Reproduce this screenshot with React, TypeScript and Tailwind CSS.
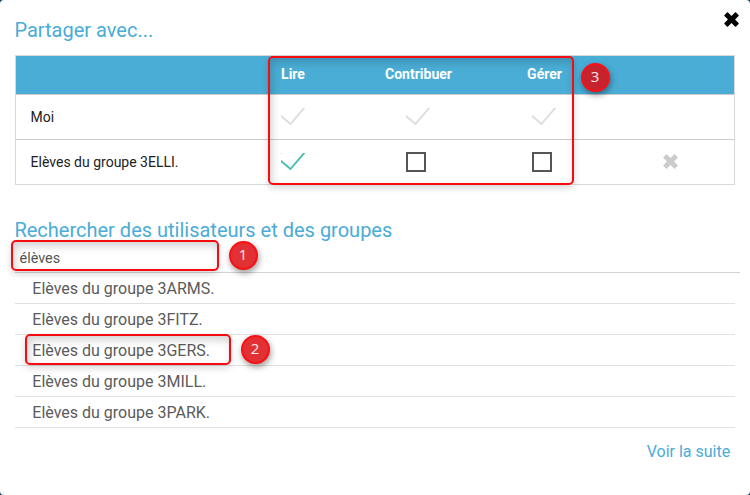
import React from "react";

function Check({ color }: { color: string }) {
  return (
    <svg width="24" height="18" viewBox="0 0 24 18" className="block" fill="none">
      <path d="M-1 7.2 L9.5 16 L23.6 -0.5" stroke={color} strokeWidth="1.9" />
      <path d="M0 0.5 H1" stroke={color} strokeOpacity="0.4" />
    </svg>
  );
}

function Box() {
  return (
    <div className="w-6">
      <div className="size-5 border-2 border-[#555]" />
    </div>
  );
}

function Cross({ size, color }: { size: number; color: string }) {
  return (
    <svg width={size} height={size} viewBox="0 0 16 16" className="block">
      <path
        d="M3.1 .5Q3.7 0 4.3 .5L8 4.2 11.7 .5Q12.3 0 12.9 .5L15.5 3.1Q16 3.7 15.5 4.3L11.8 8 15.5 11.7Q16 12.3 15.5 12.9L12.9 15.5Q12.3 16 11.7 15.5L8 11.8 4.3 15.5Q3.7 16 3.1 15.5L.5 12.9Q0 12.3 .5 11.7L4.2 8 .5 4.3Q0 3.7 .5 3.1Z"
        fill={color}
      />
    </svg>
  );
}

function Frame({ place }: { place: string }) {
  return (
    <div
      className={`pointer-events-none absolute rounded-[5px] border-2 border-[#f60c10] shadow-[0_3px_7px_rgba(0,0,0,0.16),inset_2px_4px_8px_rgba(0,0,0,0.18)] ${place}`}
    />
  );
}

function Badge({ n, place }: { n: number; place: string }) {
  return (
    <div
      className={`absolute flex size-[29px] items-center justify-center rounded-full border-2 border-[#fb1015] font-['Open_Sans',sans-serif] text-[15px] leading-none text-white/90 shadow-[1px_3px_6px_rgba(0,0,0,0.4)] ${place}`}
    >
      <span className="-mt-[2px] pr-px">{n}</span>
    </div>
  );
}

const groups = ["3ARMS", "3FITZ", "3GERS", "3MILL", "3PARK"];

export default function App() {
  return (
    <div className="h-[495px] w-[750px] overflow-hidden bg-[#173f54] font-[Roboto,sans-serif]">
      <main className="relative h-full rounded-[4px] bg-white pt-[18px] pl-[15px]">
        <div className="flex h-[37px] items-start justify-between pr-[11px]">
          <h1 className="-ml-[0.6px] text-[20px] leading-6 text-[#4aacd6]">Partager avec...</h1>
          <button aria-label="Fermer" className="-mt-[6px]">
            <Cross size={15} color="#000" />
          </button>
        </div>
        <section className="h-[130px] w-[720px] border border-[#d9d9d9] text-[14px] text-[#222]">
          <div className="grid h-[39px] grid-cols-[214px_126px_125px_127px_126px] border-b border-[#ccc] bg-[#4aadd6] pt-[9px] text-center leading-[19px] font-bold text-white">
            <span />
            <span>Lire</span>
            <span>Contribuer</span>
            <span>Gérer</span>
            <span />
          </div>
          <div className="grid h-[45px] grid-cols-[214px_126px_124px_128px_126px] items-center justify-items-center border-b border-[#ccc]">
            <span className="justify-self-start pl-[14.6px]">Moi</span>
            <Check color="#ddd" />
            <Check color="#ddd" />
            <Check color="#ddd" />
            <span />
          </div>
          <div className="grid h-[44px] grid-cols-[214px_126px_124px_128px_124px] items-center justify-items-center">
            <span className="justify-self-start pl-[14.6px]">Elèves du groupe 3ELLI.</span>
            <Check color="#46bfaf" />
            <Box />
            <Box />
            <div className="-mt-px">
              <Cross size={15} color="#ccc" />
            </div>
          </div>
        </section>
        <h2 className="mt-[33px] -ml-[0.6px] text-[20px] leading-6 text-[#4aacd6]">
          Rechercher des utilisateurs et des groupes
        </h2>
        <div className="h-[31px] w-[725px] border-b border-[#d4d4d4] pt-[8px] pl-[4.5px] text-[14.4px] leading-[18px] text-[#555]">
          élèves
        </div>
        <ul className="w-[720px]">
          {groups.map((group) => (
            <li
              key={group}
              className="h-[31px] border-b border-[#e1e1e1] pl-[17.3px] text-[16px] leading-[31px] text-[#5b5b5b]"
            >
              Elèves du groupe {group}.
            </li>
          ))}
        </ul>
        <div className="mt-[12px] pr-[19.8px] text-right text-[16px] leading-6 text-[#4aacd6]">
          Voir la suite
        </div>

        <Frame place="left-[268px] top-[56px] h-[129px] w-[306px]" />
        <Frame place="left-[11px] top-[240px] h-[31px] w-[208px]" />
        <Frame place="left-[25px] top-[334px] h-[31px] w-[206px]" />
        <Badge n={3} place="left-[581px] top-[63px] bg-[#c5232d]" />
        <Badge n={1} place="left-[229px] top-[241px] bg-[#e23135]" />
        <Badge n={2} place="left-[241px] top-[335px] bg-[#e23135]" />
      </main>
    </div>
  );
}
